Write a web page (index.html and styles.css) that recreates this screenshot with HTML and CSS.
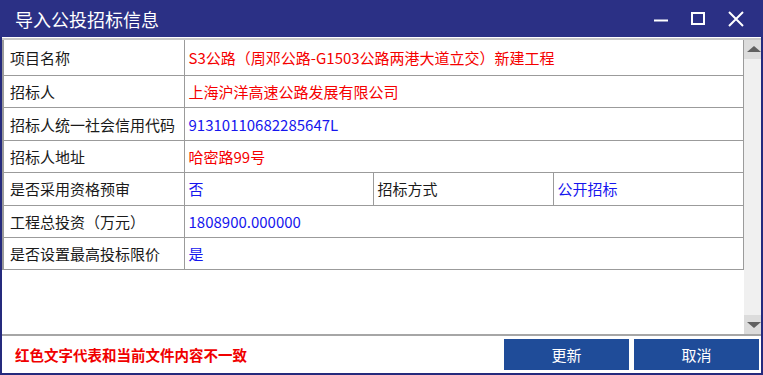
FILE: index.html
```html
<!DOCTYPE html>
<html lang="zh-CN">
<head>
    <meta charset="UTF-8">
    <title>导入公投招标信息</title>
    <link rel="stylesheet" href="styles.css">
</head>
<body>
    <div class="window">
        <div class="titlebar">
            <div class="title">导入公投招标信息</div>
            <div class="controls">
                <svg class="ctl" width="16" height="16" viewBox="0 0 16 16"><path d="M1 9.5h14" stroke="#fff" stroke-width="2"/></svg>
                <svg class="ctl" width="16" height="16" viewBox="0 0 16 16"><rect x="2" y="2" width="12" height="11" fill="none" stroke="#fff" stroke-width="2"/></svg>
                <svg class="ctl" width="18" height="18" viewBox="0 0 18 18"><path d="M2 2l14 14M16 2L2 16" stroke="#fff" stroke-width="2"/></svg>
            </div>
        </div>
        <div class="main">
            <div class="scroll-area">
                <table class="info">
                    <colgroup>
                        <col class="c1"><col class="c2"><col class="c3"><col class="c4">
                    </colgroup>
                    <tr>
                        <td>项目名称</td>
                        <td colspan="3" class="red">S3公路（周邓公路-G1503公路两港大道立交）新建工程</td>
                    </tr>
                    <tr>
                        <td>招标人</td>
                        <td colspan="3" class="red">上海沪洋高速公路发展有限公司</td>
                    </tr>
                    <tr>
                        <td>招标人统一社会信用代码</td>
                        <td colspan="3" class="blue">91310110682285647L</td>
                    </tr>
                    <tr>
                        <td>招标人地址</td>
                        <td colspan="3" class="red">哈密路99号</td>
                    </tr>
                    <tr>
                        <td>是否采用资格预审</td>
                        <td class="blue">否</td>
                        <td>招标方式</td>
                        <td class="blue">公开招标</td>
                    </tr>
                    <tr>
                        <td>工程总投资（万元）</td>
                        <td colspan="3" class="blue">1808900.000000</td>
                    </tr>
                    <tr>
                        <td>是否设置最高投标限价</td>
                        <td colspan="3" class="blue">是</td>
                    </tr>
                </table>
            </div>
            <div class="scrollbar">
                <div class="arrow up"></div>
                <div class="track"></div>
                <div class="arrow down"></div>
            </div>
        </div>
        <div class="footer">
            <div class="note">红色文字代表和当前文件内容不一致</div>
            <div class="buttons">
                <button class="btn">更新</button>
                <button class="btn">取消</button>
            </div>
        </div>
    </div>
</body>
</html>
```

FILE: styles.css
```css
body {
    margin: 0;
    font-family: "Noto Sans CJK SC", "Noto Sans", sans-serif;
}
.window {
    width: 763px;
    height: 375px;
    box-sizing: border-box;
    border: 2px solid #252a7d;
    border-top: none;
    display: flex;
    flex-direction: column;
    background: #fff;
}
.titlebar {
    height: 37px;
    background: #2b3085;
    display: flex;
    align-items: center;
    justify-content: space-between;
    padding-left: 15px;
    margin: 0 -2px;
}
.title {
    color: #fff;
    font-size: 18px;
}
.controls {
    display: flex;
    align-items: center;
    gap: 21px;
    padding-right: 18px;
}
.ctl {
    display: block;
}
.main {
    flex: 1;
    display: flex;
    border-top: 2px solid #c8c8c8;
    border-bottom: 2px solid #a6a6a6;
    margin-top: 1px;
}
.scroll-area {
    flex: 1;
    background: #fff;
}
.info {
    border-collapse: collapse;
    table-layout: fixed;
    width: 740px;
    font-size: 15px;
    color: #1a1a1a;
}
.c1 { width: 181px; }
.c2 { width: 189px; }
.c3 { width: 180px; }
.c4 { width: 190px; }
.info td {
    border: 1px solid #9b9b9b;
    height: 31.4px;
    padding: 0 0 0 4px;
    white-space: nowrap;
    overflow: hidden;
}
.info tr:first-child td {
    border-top: none;
    height: 35px;
}
.info td:first-child {
    border-left: 2px solid #9b9b9b;
    padding-left: 6px;
}
.red { color: #f50000; }
.blue { color: #1616ee; }
.scrollbar {
    width: 19px;
    background: #f0f0f0;
    display: flex;
    flex-direction: column;
}
.arrow {
    height: 19px;
    background: #dcdcdc;
    position: relative;
}
.arrow::after {
    content: "";
    position: absolute;
    left: 3px;
    border-left: 7px solid transparent;
    border-right: 7px solid transparent;
}
.up::after {
    top: 6px;
    border-bottom: 6px solid #606060;
}
.down::after {
    top: 7px;
    border-top: 6px solid #606060;
}
.track {
    flex: 1;
}
.footer {
    height: 37px;
    display: flex;
    align-items: center;
    justify-content: space-between;
    padding: 0 2px 0 13px;
}
.note {
    color: #f00000;
    font-weight: bold;
    font-size: 14.5px;
}
.buttons {
    display: flex;
    gap: 5px;
}
.btn {
    width: 125px;
    height: 31px;
    border: none;
    background: #1f4c99;
    color: #fff;
    font-family: inherit;
    font-size: 15px;
    padding: 0;
}
```
